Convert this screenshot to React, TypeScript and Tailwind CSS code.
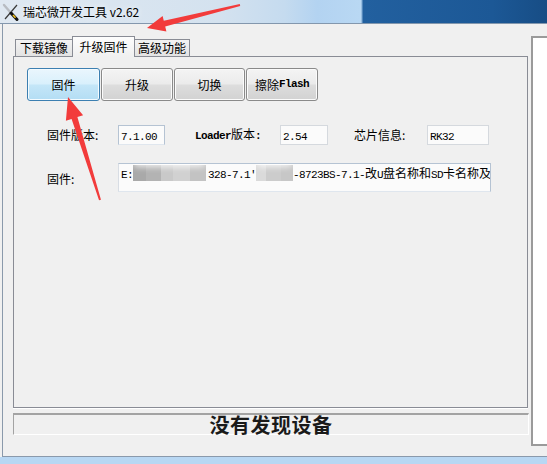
import React from 'react';

// splits a string into latin / CJK runs so latin can use the narrow mono face
const MixedText = ({ text, boldLatin = false }: { text: string; boldLatin?: boolean }) => (
  <>
    {(text.match(/[\x00-\xff]+|[^\x00-\xff]+/g) || []).map((run, i) =>
      /^[\x00-\xff]/.test(run) ? (
        <span
          key={i}
          className={
            boldLatin
              ? "font-['Liberation_Mono',monospace] text-[11px] tracking-[-0.6px] font-bold"
              : "font-['Liberation_Mono',monospace] text-[11px] tracking-[-0.6px]"
          }
        >
          {run}
        </span>
      ) : (
        <span key={i} className="font-['Noto_Sans_CJK_SC',sans-serif] text-[12px]">
          {run}
        </span>
      )
    )}
  </>
);

const Mosaic = ({ blocks }: { blocks: { w: number; c: string }[] }) => (
  <span className="relative inline-flex h-[16px] align-top blur-[0.6px]">
    <span className="absolute -top-[8px] left-0 right-0 h-[10px] rounded-full bg-white/80 blur-[3px]" />
    {blocks.map((b, i) => (
      <span key={i} className="h-[16px]" style={{ width: b.w, background: b.c }} />
    ))}
  </span>
);

const AppIcon = () => (
  <svg width="17" height="18" viewBox="0 0 17 18">
    <line x1="15" y1="2" x2="3" y2="16" stroke="#3a3a3a" strokeWidth="1.2" />
    <line x1="2" y1="2" x2="9" y2="10" stroke="#b8bcc2" strokeWidth="2.4" strokeLinecap="round" />
    <line x1="9" y1="10" x2="15" y2="16.5" stroke="#111" strokeWidth="3" strokeLinecap="round" />
    <line x1="11" y1="12" x2="13.5" y2="14.8" stroke="#f2c21b" strokeWidth="1.6" />
  </svg>
);

const buttons = [
  { label: '固件', w: 'w-[73px]', active: true },
  { label: '升级', w: 'w-[72px]', active: false },
  { label: '切换', w: 'w-[71px]', active: false },
  { label: '擦除Flash', w: 'w-[72px]', active: false },
];

const App = () => {
  return (
    <div className="relative w-[547px] h-[464px] overflow-hidden bg-[#f0f0f0] flex flex-col text-black font-['Noto_Sans_CJK_SC',sans-serif]">
      {/* Title bar */}
      <div className="h-[24px] shrink-0 flex items-center border-b border-[#8397ad] bg-[linear-gradient(to_right,#dfe8f1_0%,#d4e2ef_40%,#c5dbef_52%,#b3d3f1_58%,#b9d8f3_66%,#22609f_66.4%,#1c5896_90%,#174d85_100%)]">
        <div className="ml-[2px]">
          <AppIcon />
        </div>
        <span className="ml-[4px] text-[12px] leading-none text-[#000] [text-shadow:0_0_6px_#fff]">
          瑞芯微开发工具 v2.62
        </span>
      </div>

      {/* Window body */}
      <div className="flex-1 flex ml-[2px] border-l border-b border-[#8a99ab]">
        <div className="ml-[10px] w-[515px] flex flex-col">
          {/* Tabs */}
          <div className="mt-[12px] h-[20px] flex items-end pl-[2px] relative z-10">
            <div className="w-[57px] h-[17px] border-t border-l border-[#898c95] bg-gradient-to-b from-[#f3f3f3] to-[#e3e3e3] text-[12px] leading-[16px] text-center">
              下载镜像
            </div>
            <div className="w-[63px] h-[21px] -mb-px border-t border-l border-r border-[#898c95] bg-gradient-to-b from-[#fdfdfd] to-[#f0f0f0] text-[12px] leading-[19px] text-center">
              升级固件
            </div>
            <div className="w-[55px] h-[17px] border-t border-r border-[#898c95] bg-gradient-to-b from-[#f3f3f3] to-[#e3e3e3] text-[12px] leading-[16px] text-center">
              高级功能
            </div>
          </div>

          {/* Tab panel */}
          <div className="h-[352px] border border-[#898c95] bg-[#f0f0f0] shadow-[0_1px_0_#ffffff] pl-[13px] pt-[11px]">
            <div className="flex gap-[1px]">
              {buttons.map((b) => (
                <div
                  key={b.label}
                  className={
                    b.active
                      ? `${b.w} h-[33px] rounded-[3px] border border-[#3c7fb1] bg-[linear-gradient(to_bottom,#eaf6fd_0%,#d9f0fc_48%,#c4e6f8_52%,#b3ddf4_100%)] shadow-[inset_0_0_0_1px_#f4fbff] flex items-center justify-center text-[12px]`
                      : `${b.w} h-[33px] rounded-[3px] border border-[#8a8a8a] bg-[linear-gradient(to_bottom,#f4f4f4_0%,#ebebeb_48%,#dddddd_52%,#d2d2d2_100%)] shadow-[inset_0_0_0_1px_#fbfbfb] flex items-center justify-center text-[12px]`
                  }
                >
                  {b.label === '擦除Flash' ? <MixedText text={b.label} boldLatin /> : b.label}
                </div>
              ))}
            </div>

            {/* version row */}
            <div className="mt-[24px] flex items-center pl-[20px] text-[12px]">
              <span className="w-[71px]">固件版本:</span>
              <div className="w-[47px] h-[20px] border border-[#b5c3d3] border-b-[#dfe6ee] bg-[#fbfbfb] pl-[2px] leading-[18px]">
                <MixedText text="7.1.00" />
              </div>
              <span className="ml-[30px] w-[85px]">
                <MixedText text="Loader版本:" boldLatin />
              </span>
              <div className="w-[48px] h-[20px] border border-[#d5d9de] bg-[#fbfbfb] pl-[2px] leading-[18px]">
                <MixedText text="2.54" />
              </div>
              <span className="ml-[26px] w-[73px]">芯片信息:</span>
              <div className="w-[62px] h-[20px] border border-[#d5d9de] bg-[#fbfbfb] pl-[2px] leading-[18px]">
                <MixedText text="RK32" />
              </div>
            </div>

            {/* firmware row */}
            <div className="mt-[18px] flex items-center pl-[20px] text-[12px]">
              <span className="w-[71px] pt-[2px]">固件:</span>
              <div className="w-[373px] h-[29px] border border-[#b5c3d3] border-b-[#dfe6ee] border-l-[#d8dde4] bg-[#fbfbfb] pl-[2px] pt-[1px] leading-[16px] whitespace-nowrap overflow-hidden">
                <MixedText text="E:" />
                <Mosaic
                  blocks={[
                    { w: 13, c: '#a9a9a9' },
                    { w: 15, c: '#b3b3b3' },
                    { w: 12, c: '#c9c9c9' },
                    { w: 17, c: '#d1d1d1' },
                    { w: 16, c: '#c3c3c3' },
                  ]}
                />
                <span className="inline-block w-[2px]" />
                <MixedText text="328-7.1'" />
                <Mosaic
                  blocks={[
                    { w: 10, c: '#dadada' },
                    { w: 15, c: '#cccccc' },
                    { w: 12, c: '#c7c7c7' },
                  ]}
                />
                <MixedText text="-8723BS-7.1-改U盘名称和SD卡名称及" />
              </div>
            </div>
          </div>

          {/* Status bar */}
          <div className="mt-[5px] h-[22px] w-[516px] border-t-2 border-l border-t-[#a3a3a3] border-l-[#a3a3a3] border-b border-r border-b-white border-r-white flex items-center justify-center">
            <span className="text-[20px] leading-[20px] font-bold text-[#1a1a1a] tracking-[0.5px]">没有发现设备</span>
          </div>
        </div>

        {/* right side panel */}
        <div className="ml-[3px] mt-[12px] h-[410px] flex-1 border-t-2 border-l-2 border-b-2 border-[#9a9a9a] bg-white" />
      </div>

      {/* taskbar strip */}
      <div className="h-[7px] shrink-0 bg-[#b8d7f3]" />

      {/* red annotation arrows */}
      <svg className="absolute inset-0 pointer-events-none" width="547" height="464" viewBox="0 0 547 464">
        <polygon
          points="147,28 166.4,31.5 165.2,26.6 240.2,6 239.8,4 163.8,20.8 162.6,15.9"
          fill="#f23b3b"
        />
        <polygon
          points="68,97 83.1,115.3 77.4,117.1 100.95,199.7 99.05,200.3 71.6,118.9 65.9,120.7"
          fill="#f23b3b"
        />
      </svg>
    </div>
  );
};

export default App;
